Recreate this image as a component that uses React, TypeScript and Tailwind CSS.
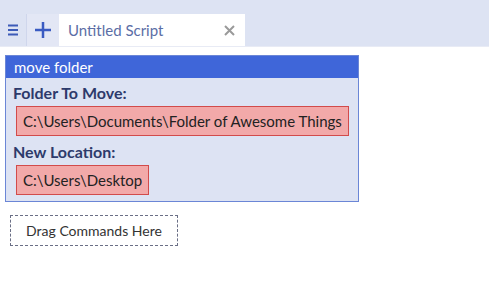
import React from 'react';

function Field({ label, value }: { label: string; value: string }) {
  return (
    <div className="flex flex-col">
      <div className="text-[16px] font-bold leading-[20px] text-[#2d3a6b]">{label}</div>
      <div className="mt-[3px] ml-[3px] self-start whitespace-nowrap border border-[#d24b4b] bg-[#f2a9a9] px-[6px] h-[30px] flex items-center text-[15px] text-[#222]">
        {value}
      </div>
    </div>
  );
}

export default function App() {
  return (
    <div className="w-[489px] h-[294px] bg-white overflow-hidden" style={{ fontFamily: 'Lato, sans-serif' }}>
      <div className="h-[47px] bg-[#dde3f3] flex items-end border-b border-[#e8ebf5]">
        <div className="flex h-[32px] w-full">
          <div className="w-[27px] flex items-center justify-center border-r border-[#cfd6ec]">
            <svg width="12" height="12" viewBox="0 0 12 12">
              <rect x="1" y="0.5" width="10" height="2" fill="#3c5bb8" />
              <rect x="1" y="5" width="10" height="2" fill="#3c5bb8" />
              <rect x="1" y="9.5" width="10" height="2" fill="#3c5bb8" />
            </svg>
          </div>
          <div className="w-[32px] flex items-center justify-center bg-[#e3e7f5]">
            <svg width="16" height="16" viewBox="0 0 16 16">
              <rect x="0" y="6.75" width="16" height="2.5" fill="#3a5bc2" />
              <rect x="6.75" y="0" width="2.5" height="16" fill="#3a5bc2" />
            </svg>
          </div>
          <div className="w-[186px] bg-white flex items-center pl-[9px] pr-[10px] justify-between">
            <span className="text-[15px] text-[#5b6ea6]">Untitled Script</span>
            <svg width="11" height="11" viewBox="0 0 11 11">
              <path d="M1 1L10 10M10 1L1 10" stroke="#9a9a9a" strokeWidth="2" />
            </svg>
          </div>
        </div>
      </div>

      <div className="px-[5px] pt-[8px]">
        <div className="w-[354px] border border-[#6b86d6] bg-[#dde3f3]">
          <div className="h-[22px] bg-[#3f66d9] text-white text-[15px] leading-[22px] pl-[8px]">move folder</div>
          <div className="px-[7px] pt-[5px] pb-[6px] flex flex-col gap-[6px]">
            <Field label="Folder To Move:" value={'C:\\Users\\Documents\\Folder of Awesome Things'} />
            <Field label="New Location:" value={'C:\\Users\\Desktop'} />
          </div>
        </div>
        <div className="mt-[13px] ml-[5px] w-[168px] h-[31px] border border-dashed border-[#6a6f86] flex items-center justify-center text-[14px] text-[#333]">
          Drag Commands Here
        </div>
      </div>
    </div>
  );
}
